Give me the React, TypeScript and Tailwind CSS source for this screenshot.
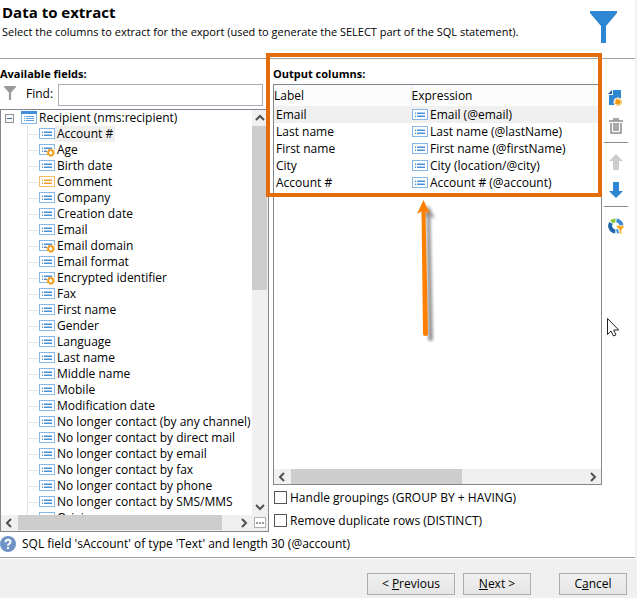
import React from "react";

type Kind = "plain" | "computed" | "memo";

const fields: { name: string; kind?: Kind }[] = [
  { name: "Account #" },
  { name: "Age", kind: "computed" },
  { name: "Birth date" },
  { name: "Comment", kind: "memo" },
  { name: "Company" },
  { name: "Creation date" },
  { name: "Email" },
  { name: "Email domain", kind: "computed" },
  { name: "Email format" },
  { name: "Encrypted identifier", kind: "computed" },
  { name: "Fax" },
  { name: "First name" },
  { name: "Gender" },
  { name: "Language" },
  { name: "Last name" },
  { name: "Middle name" },
  { name: "Mobile" },
  { name: "Modification date" },
  { name: "No longer contact (by any channel)" },
  { name: "No longer contact by direct mail" },
  { name: "No longer contact by email" },
  { name: "No longer contact by fax" },
  { name: "No longer contact by phone" },
  { name: "No longer contact by SMS/MMS" },
  { name: "Origin" },
];

const outputs = [
  ["Email", "Email (@email)"],
  ["Last name", "Last name (@lastName)"],
  ["First name", "First name (@firstName)"],
  ["City", "City (location/@city)"],
  ["Account #", "Account # (@account)"],
];

function FieldIcon({ kind = "plain" }: { kind?: Kind }) {
  const edge = kind === "memo" ? "#f3bd6c" : "#86b7e6";
  const line = kind === "memo" ? "#efa030" : "#4a90d9";
  const soft = kind === "memo" ? "#f7cf93" : "#a5caee";
  return (
    <svg width="16" height="14" viewBox="0 0 16 14" className="shrink-0" aria-hidden="true">
      <g shapeRendering="crispEdges">
        <rect x="0.5" y="1.5" width="15" height="10" fill="#fff" stroke={edge} />
        <path d="M3 4h1v1H3zM5 4h8v1H5z" fill={soft} />
        <path d="M3 5h1v1H3zM3 8h1v1H3zM5 5h8v1H5zM5 8h8v1H5z" fill={line} />
        <path d="M5 7h8v1H5zM3 7h1v1H3z" fill={soft} />
      </g>
      {kind === "computed" && (
        <g>
          <rect x="8" y="6" width="8" height="8" fill="#fff" />
          <circle cx="11.7" cy="9.7" r="3.5" fill="none" stroke="#f0a023" strokeWidth="1.4" strokeDasharray="1.4 1.35" />
          <circle cx="11.7" cy="9.7" r="2.5" fill="#fff" stroke="#ee9a1a" strokeWidth="1.6" />
        </g>
      )}
    </svg>
  );
}

function TableIcon() {
  return (
    <svg width="16" height="14" viewBox="0 0 16 14" className="shrink-0" shapeRendering="crispEdges" aria-hidden="true">
      <rect x="0.5" y="0.5" width="15" height="12" fill="#fff" stroke="#86b7e6" />
      <rect width="16" height="3" fill="#3f8fdc" />
      <path d="M3 5h1v1H3zM3 7h1v1H3zM3 9h1v1H3zM5 5h8v1H5zM5 7h8v1H5zM5 9h8v1H5z" fill="#5b9cdf" />
    </svg>
  );
}

function Funnel({ className }: { className: string }) {
  return (
    <svg viewBox="0 0 27 32" preserveAspectRatio="none" className={className} aria-hidden="true">
      <path d="M0 0h27v2L16 15v17h-5V15L0 2z" fill="currentColor" />
    </svg>
  );
}

function Chevron({ dir }: { dir: "up" | "down" | "left" | "right" }) {
  const d = {
    up: "M1 7l4-4 4 4",
    down: "M1 3l4 4 4-4",
    left: "M7 1L3 5l4 4",
    right: "M3 1l4 4-4 4",
  }[dir];
  return (
    <svg width="10" height="10" viewBox="0 0 10 10" aria-hidden="true">
      <path d={d} fill="none" stroke="#505050" strokeWidth="2" />
    </svg>
  );
}

function ScrollButton({ dir }: { dir: "up" | "down" | "left" | "right" }) {
  return (
    <button type="button" aria-label={`Scroll ${dir}`} className="flex size-4 shrink-0 items-center justify-center">
      <Chevron dir={dir} />
    </button>
  );
}

function Tool({ label, children }: { label: string; children: React.ReactNode }) {
  return (
    <button type="button" aria-label={label} className="flex h-7 w-6 items-center justify-center">
      <svg width="16" height="16" viewBox="0 0 16 16" aria-hidden="true">
        {children}
      </svg>
    </button>
  );
}

function Check({ label }: { label: string }) {
  return (
    <label className="flex h-[23px] items-center gap-[3px] whitespace-nowrap">
      <input type="checkbox" className="size-[13px] shrink-0 appearance-none border border-[#555] bg-white checked:bg-[#3f8fdc]" />
      {label}
    </label>
  );
}

const wizardButton =
  "h-[22px] border border-[#adadad] bg-linear-to-b from-[#f0f0f0] to-[#e5e5e5] text-center leading-5";

export default function App() {
  return (
    <div className="relative flex h-screen flex-col overflow-hidden border-r-2 border-[#f0f0f0] bg-white font-['Open_Sans','Noto_Sans',sans-serif] text-[12px] leading-4 text-black">
      <header className="flex h-[59px] shrink-0 justify-between border-b border-[#a0a0a0] pl-0.5">
        <div>
          <h1 className="pt-0.5 text-[15px] leading-5 font-bold">Data to extract</h1>
          <p className="pt-0.5 text-[11px] whitespace-nowrap">
            Select the columns to extract for the export (used to generate the SELECT part of the SQL statement).
          </p>
        </div>
        <Funnel className="mt-[11px] mr-[18px] h-8 w-[27px] shrink-0 text-[#2f86d2]" />
      </header>

      <main className="flex min-h-0 flex-1">
        <section className="flex w-[269px] shrink-0 flex-col pt-[7px]">
          <h2 className="h-[18px] text-[11px] font-bold">Available fields:</h2>
          <div className="flex h-[22px] items-center">
            <Funnel className="mb-1 ml-1 h-[14px] w-3 text-[#9a9a9a]" />
            <label htmlFor="find" className="mb-0.5 w-[42px] pl-2.5">
              Find:
            </label>
            <input id="find" className="mr-1.5 h-[22px] min-w-0 flex-1 border border-[#abadb3] px-1 outline-none" />
          </div>

          <div className="mt-[3px] flex min-h-0 flex-1 flex-col border border-[#828790]">
            <div className="flex min-h-0 flex-1">
              <div className="min-w-0 flex-1 overflow-hidden">
                <div className="flex h-4 items-center">
                  <button type="button" aria-label="Collapse Recipient" className="ml-1 flex size-[9px] items-center justify-center border border-[#919191] bg-[#f8f8f8]">
                    <span className="h-px w-[5px] bg-[#4b63a7]" />
                  </button>
                  <span className="w-[7px]" />
                  <TableIcon />
                  <span className="pl-0.5 whitespace-nowrap">Recipient (nms:recipient)</span>
                </div>
                <ul className="ml-[26px] border-l border-[#e4e4e4]">
                  {fields.map((f, i) => (
                    <li key={f.name} className="flex h-4 items-center">
                      <span className="mr-px h-px w-2.5 shrink-0 bg-[#e4e4e4]" />
                      <FieldIcon kind={f.kind} />
                      <span className={i === 0 ? "bg-[#f0f0f0] px-0.5 whitespace-nowrap" : "px-0.5 whitespace-nowrap"}>{f.name}</span>
                    </li>
                  ))}
                </ul>
              </div>
              <div className="flex w-4 shrink-0 flex-col items-center bg-[#f0f0f0]">
                <ScrollButton dir="up" />
                <div className="w-full flex-1 pr-px">
                  <div className="h-[44%] w-full bg-[#cdcdcd]" />
                </div>
                <ScrollButton dir="down" />
              </div>
            </div>
            <div className="flex h-4 shrink-0 bg-[#f0f0f0]">
              <ScrollButton dir="left" />
              <div className="flex-1 pr-3.5 pl-px">
                <div className="h-[15px] bg-[#cdcdcd]" />
              </div>
              <ScrollButton dir="right" />
              <button type="button" aria-label="More" className="mx-0.5 mt-0.5 flex h-[11px] w-3 items-center justify-center gap-px border border-[#b0b0b0] bg-white">
                <span className="size-0.5 bg-[#999]" />
                <span className="size-0.5 bg-[#999]" />
                <span className="size-0.5 bg-[#999]" />
              </button>
            </div>
          </div>
        </section>

        <section className="relative ml-1 flex min-w-0 flex-1 flex-col pt-[7px]">
          <h2 className="h-[18px] text-[11px] font-bold">Output columns:</h2>
          <div className="flex min-h-0 flex-1 flex-col border border-[#828790]">
            <div className="min-h-0 flex-1 overflow-hidden">
              <table className="w-full table-fixed border-collapse text-left whitespace-nowrap">
                <thead>
                  <tr className="h-[21px] bg-[#fcfcfc]">
                    <th className="w-[137px] border-r border-[#e3ecf7] p-0 font-normal">Label</th>
                    <th className="p-0 font-normal">Expression</th>
                  </tr>
                </thead>
                <tbody>
                  {outputs.map(([label, expression], i) => (
                    <tr key={label} className={i === 0 ? "h-[17px] bg-[#f0f0f0]" : "h-[17px]"}>
                      <td className="p-0 pl-0.5">{label}</td>
                      <td className="p-0 pl-px">
                        <span className="flex items-center gap-0.5">
                          <FieldIcon />
                          {expression}
                        </span>
                      </td>
                    </tr>
                  ))}
                </tbody>
              </table>
            </div>
            <div className="flex h-[15px] shrink-0 items-center bg-[#f0f0f0]">
              <ScrollButton dir="left" />
              <div className="h-full flex-1 pl-px">
                <div className="h-full w-[58%] bg-[#cdcdcd]" />
              </div>
              <ScrollButton dir="right" />
            </div>
          </div>
          <div className="h-[47px] shrink-0 pt-px pl-px">
            <Check label="Handle groupings (GROUP BY + HAVING)" />
            <Check label="Remove duplicate rows (DISTINCT)" />
          </div>

          {/* Highlight around the selected output columns */}
          <div className="pointer-events-none absolute -top-1.5 right-0 -left-[7px] h-36 border-4 border-[#e46c0a]" />
          <svg className="pointer-events-none absolute top-[138px] left-[140px]" width="28" height="150" viewBox="0 0 28 150" aria-hidden="true">
            <defs>
              <filter id="shade" x="-50%" y="-10%" width="200%" height="120%">
                <feGaussianBlur stdDeviation="1.5" />
              </filter>
              <g id="pointer">
                <path d="M10.500 3L17 17l-4.500-2.500 2.500 122a2.500 2.500 0 0 1-5 0L8.500 14.500 4 17z" />
              </g>
            </defs>
            <use href="#pointer" x="5" y="5" fill="#000" opacity="0.4" filter="url(#shade)" />
            <use href="#pointer" fill="#ff7f00" />
          </svg>
        </section>

        <aside className="flex w-[33px] shrink-0 flex-col pt-[25px] pl-0.5">
          <Tool label="Add column">
            <path d="M5 0h8v15H1V5h4z" fill="#2f86d2" />
            <path d="M4 0v4H0z" fill="#1f5f9f" />
            <circle cx="10" cy="12" r="4.6" fill="#fff" />
            <circle cx="10" cy="12" r="2.600" fill="#f39c12" />
            <circle cx="10" cy="12" r="3.300" fill="none" stroke="#f39c12" strokeWidth="1.300" strokeDasharray="1.300 1.300" />
          </Tool>
          <Tool label="Delete column">
            <g fill="none" stroke="#8c8c8c" strokeWidth="1.500">
              <path d="M1 3h14M6 3V1h4v2M3 5v10h10V5M6 5v8M8 5v8M10 5v8" />
            </g>
          </Tool>
          <hr className="mt-0.5 mb-[5px] w-6 border-[#8c8c8c]" />
          <Tool label="Move up">
            <path d="M8 0l7 7h-4v9H5V7H1z" fill="#cdcdcd" />
          </Tool>
          <Tool label="Move down">
            <path d="M8 16l7-7h-4V0H5v9H1z" fill="#2f86d2" />
          </Tool>
          <hr className="mt-0.5 mb-[5px] w-6 border-[#8c8c8c]" />
          <Tool label="Distribution of values">
            <g fill="none" strokeWidth="4">
              <path d="M8.500 2.500A5.500 5.500 0 0 1 13.500 7.500" stroke="#3a8ad6" />
              <path d="M3.500 4A5.500 5.500 0 0 1 7.500 2.500" stroke="#8cc63f" />
              <path d="M3 5A5.500 5.500 0 0 0 7.300 13.400" stroke="#1f65aa" />
              <path d="M8.500 13.500l2-.5" stroke="#3a8ad6" />
            </g>
            <path d="M8.500 7.500H16v1.500l-2.500 3v4h-2v-4L8.500 9z" fill="#f5a623" stroke="#fff" strokeWidth="0.500" />
          </Tool>
        </aside>
      </main>

      <div className="flex h-[26px] shrink-0 items-center border-b border-[#a0a0a0] pb-0.5">
        <svg width="16" height="16" viewBox="0 0 16 16" className="shrink-0" aria-hidden="true">
          <circle cx="8" cy="8" r="8" fill="#6f93c6" />
          <path d="M5.500 6.200C5.500 2.800 10.700 3 10.500 6 10.400 7.800 8 7.800 8 9.800M8 11v2" fill="none" stroke="#fff" strokeWidth="2" />
        </svg>
        <p className="pl-1.5 whitespace-nowrap">SQL field 'sAccount' of type 'Text' and length 30 (@account)</p>
      </div>

      <footer className="flex h-10 shrink-0 justify-end gap-2 border-t border-white bg-[#f0f0f0] pt-3.5 pr-2">
        <button type="button" className={`${wizardButton} w-[88px]`}>
          &lt; <u>P</u>revious
        </button>
        <button type="button" className={`${wizardButton} w-[68px]`}>
          <u>N</u>ext &gt;
        </button>
        <button type="button" className={`${wizardButton} ml-5 w-[68px]`}>
          C<u>a</u>ncel
        </button>
      </footer>

      {/* Mouse pointer */}
      <svg className="pointer-events-none absolute top-[317px] left-[606px]" width="14" height="20" viewBox="0 0 14 20" aria-hidden="true">
        <path d="M1.500 1.500v16l3.500-3.500 2.500 5 2.500-1.200-2.300-4.800h5z" fill="#fff" stroke="#222" />
      </svg>
    </div>
  );
}
